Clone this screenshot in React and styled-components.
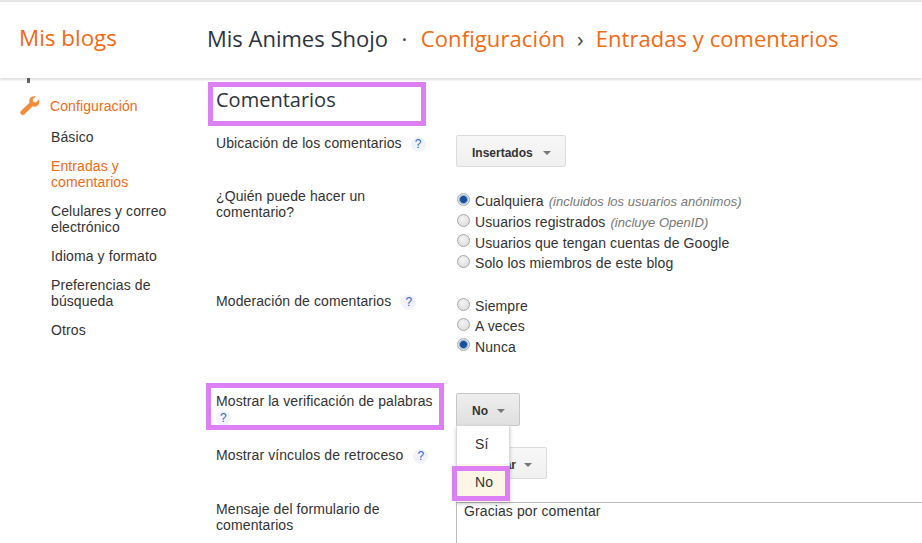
import React from 'react';
import styled, { createGlobalStyle } from 'styled-components';

const Global = createGlobalStyle`
  html, body { margin: 0; padding: 0; background: #fff; height: 100%; overflow: hidden; }
  * { box-sizing: border-box; }
  body { font-family: "Liberation Sans", Arial, sans-serif; font-size: 14px; color: #333; letter-spacing: 0.1px; }
`;

const orange = '#f26a12';

const Page = styled.div`
  width: 922px;
  height: 543px;
  overflow: hidden;
  position: relative;
`;
const Header = styled.header`
  height: 78px;
  border-top: 2px solid #e6e6e6;
  box-shadow: 0 2px 2px rgba(0, 0, 0, 0.13);
  display: flex;
  align-items: center;
  padding: 0 0 5px 19px;
  font-family: "Open Sans", sans-serif;
  font-size: 22px;
  letter-spacing: 0;
  position: relative;
  z-index: 2;
  background: #fff;
`;
const HeaderBlog = styled.div`
  width: 188px;
  color: ${orange};
  font-size: 22.4px;
`;
const Crumbs = styled.div`
  display: flex;
  align-items: center;
  color: #2b3440;
`;
const CrumbLink = styled.span`
  color: ${orange};
  letter-spacing: ${(p) => p.$track}px;
`;
const Sep = styled.span`
  margin: 0 ${(p) => p.$m}px;
  color: #444;
`;
const Body = styled.div`
  display: flex;
`;
const Sidebar = styled.nav`
  width: 208px;
  flex: none;
  padding: 20px 0 0 19px;
  position: relative;
`;
const Tick = styled.div`
  position: absolute;
  left: 27px;
  top: 0;
  width: 3px;
  height: 5px;
  background: #666;
`;
const SideHead = styled.div`
  display: flex;
  align-items: center;
  gap: 10px;
  height: 16px;
  color: ${orange};
  margin-bottom: 15px;
  svg { flex: none; margin-left: 1px; }
`;
const SideItem = styled.div`
  width: 130px;
  margin-left: 32px;
  margin-bottom: 13px;
  line-height: 16px;
  color: ${(p) => (p.$active ? orange : '#333')};
`;
const Main = styled.main`
  flex: 1;
  padding-left: 8px;
  min-width: 0;
`;
const Section = styled.h2`
  position: relative;
  margin: 9px 0 0;
  height: 29px;
  font-family: "Open Sans", sans-serif;
  font-size: 20px;
  font-weight: 400;
  line-height: 25px;
  letter-spacing: 0;
  color: #2b3440;
`;
const Highlight = styled.div`
  position: absolute;
  border: 5px solid #dd7ff5;
  pointer-events: none;
  z-index: 3;
  left: ${(p) => p.$l}px;
  top: ${(p) => p.$t}px;
  width: ${(p) => p.$w}px;
  height: ${(p) => p.$h}px;
`;
const Row = styled.div`
  display: flex;
  height: ${(p) => p.$h}px;
  position: relative;
`;
const Label = styled.div`
  width: 240px;
  flex: none;
  padding-right: 6px;
  line-height: 16px;
  padding-top: ${(p) => p.$top || 0}px;
  margin-top: ${(p) => p.$lift || 0}px;
`;
const LabelText = styled.span`
  display: inline-block;
  max-width: ${(p) => p.$max || 224}px;
`;
const Help = styled.span`
  display: inline-block;
  width: 15px;
  height: 15px;
  margin-left: ${(p) => p.$ml ?? 10}px;
  border-radius: 50%;
  background: #f1f3f8;
  color: #2f67d8;
  font-size: 12px;
  line-height: 15px;
  text-align: center;
`;
const Control = styled.div`
  position: relative;
  flex: 1;
  min-width: 0;
  padding-top: ${(p) => p.$top || 0}px;
`;
const Button = styled.div`
  display: inline-flex;
  align-items: center;
  justify-content: space-between;
  width: ${(p) => p.$w}px;
  height: ${(p) => p.$h || 32}px;
  padding: 3px 14px 0 15px;
  border: 1px solid ${(p) => (p.$open ? '#c6c6c6' : '#dcdcdc')};
  border-radius: 2px;
  background: ${(p) => (p.$open ? 'linear-gradient(#eeeeee,#e0e0e0)' : 'linear-gradient(#f7f7f7,#f0f0f0)')};
  font-size: 12px;
  font-weight: 700;
  letter-spacing: 0;
  color: #333;
`;
const Caret = styled.span`
  width: 0;
  height: 0;
  border-left: 4.5px solid transparent;
  border-right: 4.5px solid transparent;
  border-top: 4px solid #777;
`;
const Radios = styled.div`
  display: flex;
  flex-direction: column;
  gap: ${(p) => p.$gap}px;
  padding-top: ${(p) => p.$top}px;
`;
const RadioRow = styled.div`
  display: flex;
  align-items: center;
  gap: 5px;
  height: 16px;
  line-height: 16px;
`;
const Dot = styled.span`
  width: 13px;
  height: 13px;
  margin-left: 1px;
  margin-top: -4px;
  flex: none;
  border-radius: 50%;
  border: 1px solid #a8a8a8;
  background: ${(p) =>
    p.$on
      ? 'radial-gradient(circle at 50% 50%, #1c4f9a 0 3px, #6f9ccc 3.8px, #e4e8ee 5px)'
      : 'radial-gradient(circle at 45% 35%, #f4f4f4, #d8d8d8)'};
`;
const Hint = styled.em`
  font-size: 13px;
  color: #777;
  margin-left: 1px;
  letter-spacing: 0.02px;
`;
const Menu = styled.div`
  position: absolute;
  left: 0;
  top: 32px;
  width: 54px;
  height: 77px;
  background: #fff;
  border: 1px solid #d8d8d8;
  box-shadow: 0 2px 4px rgba(0, 0, 0, 0.2);
  z-index: 2;
`;
const MenuItem = styled.div`
  height: 38px;
  padding-left: ${(p) => p.$pad}px;
  line-height: 37px;
  font-size: 14px;
  background: ${(p) => (p.$on ? '#fdf6e6' : '#fff')};
`;
const TextArea = styled.div`
  height: 60px;
  border: 1px solid #bbb;
  border-right: 0;
  padding: 0 7px;
  line-height: 16px;
`;

const WrenchIcon = () => (
  <svg width="20" height="20" viewBox="0 0 22 22">
    <path
      d="M21 3.6 17.4 7.2 14.6 6.5 13.9 3.7 17.4 0.6C14.6-0.2 11.7 0.8 10.6 3.2 10 4.6 10 6 10.5 7.3L1.2 16.2C0 17.4 0 19 1 20.2 2.2 21.4 3.9 21.3 5 20.2L14 11.2C15.4 11.9 17 11.9 18.4 11.2 20.8 10 21.8 6.6 21 3.6Z"
      fill="#f58b3b"
    />
  </svg>
);

export default function App() {
  return (
    <Page>
      <Global />
      <Header>
        <HeaderBlog>Mis blogs</HeaderBlog>
        <Crumbs>
          Mis Animes Shojo
          <Sep $m={13.5}>·</Sep>
          <CrumbLink $track={0.1}>Configuración</CrumbLink>
          <Sep $m={12}>›</Sep>
          <CrumbLink $track={0.05}>Entradas y comentarios</CrumbLink>
        </Crumbs>
      </Header>
      <Body>
        <Sidebar>
          <Tick />
          <SideHead>
            <WrenchIcon />
            Configuración
          </SideHead>
          <SideItem>Básico</SideItem>
          <SideItem $active>Entradas y comentarios</SideItem>
          <SideItem>Celulares y correo electrónico</SideItem>
          <SideItem>Idioma y formato</SideItem>
          <SideItem>Preferencias de búsqueda</SideItem>
          <SideItem>Otros</SideItem>
        </Sidebar>
        <Main>
          <Section>
            <Highlight $l={-8} $t={-5} $w={218} $h={44} />
            Comentarios
          </Section>
          <Row $h={50}>
            <Label $top={19}>Ubicación de los comentarios<Help $ml={9}>?</Help></Label>
            <Control $top={19}>
              <Button $w={110}>Insertados<Caret /></Button>
            </Control>
          </Row>
          <Row $h={120}>
            <Label $top={22}><LabelText $max={190}>¿Quién puede hacer un comentario?</LabelText></Label>
            <Control>
              <Radios $gap={4.6} $top={27.5}>
                <RadioRow><Dot $on /><span>Cualquiera <Hint>(incluidos los usuarios anónimos)</Hint></span></RadioRow>
                <RadioRow><Dot /><span>Usuarios registrados <Hint>(incluye OpenID)</Hint></span></RadioRow>
                <RadioRow><Dot />Usuarios que tengan cuentas de Google</RadioRow>
                <RadioRow><Dot />Solo los miembros de este blog</RadioRow>
              </Radios>
            </Control>
          </Row>
          <Row $h={107}>
            <Label $top={7}>Moderación de comentarios<Help>?</Help></Label>
            <Control>
              <Radios $gap={4.4} $top={12}>
                <RadioRow><Dot />Siempre</RadioRow>
                <RadioRow><Dot />A veces</RadioRow>
                <RadioRow><Dot $on />Nunca</RadioRow>
              </Radios>
            </Control>
          </Row>
          <Row $h={54}>
            <Highlight $l={-10} $t={-10} $w={238} $h={47} />
            <Label>Mostrar la verificación de palabras <Help $ml={0}>?</Help></Label>
            <Control>
              <Button $w={64} $h={33} $open>No<Caret /></Button>
              <Menu>
                <MenuItem $pad={18}>Sí</MenuItem>
                <MenuItem $pad={18} $on>No</MenuItem>
              </Menu>
              <Highlight $l={-4} $t={73} $w={58} $h={35} />
            </Control>
          </Row>
          <Row $h={55}>
            <Label>Mostrar vínculos de retroceso<Help>?</Help></Label>
            <Control>
              <Button $w={91}>Mostrar<Caret /></Button>
            </Control>
          </Row>
          <Row $h={60}>
            <Label $lift={-1}><LabelText $max={190}>Mensaje del formulario de comentarios</LabelText></Label>
            <Control>
              <TextArea>Gracias por comentar</TextArea>
            </Control>
          </Row>
        </Main>
      </Body>
    </Page>
  );
}
